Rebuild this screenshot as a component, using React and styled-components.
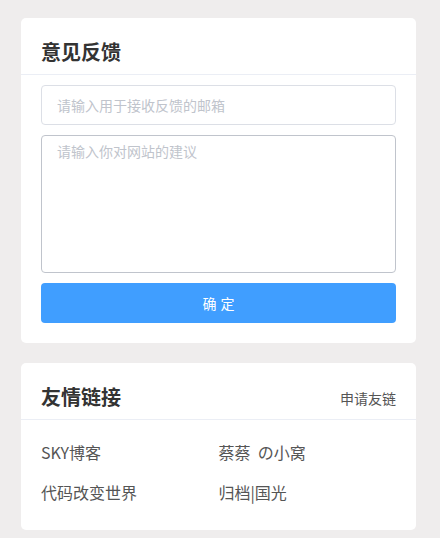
import React from "react";
import styled, { createGlobalStyle } from "styled-components";

const Global = createGlobalStyle`
  html, body { margin: 0; padding: 0; background: #efeded; }
  body { font-family: "Noto Sans CJK SC", "Noto Sans", sans-serif; }
  * { box-sizing: border-box; }
`;

const Page = styled.div`
  padding: 18px 24px 8px 21px;
  display: flex;
  flex-direction: column;
  gap: 20px;
  width: 440px;
`;

const Card = styled.section`
  background: #fff;
  border-radius: 5px;
  width: 395px;
`;

const Header = styled.div`
  height: 57px;
  padding: 0 20px;
  display: flex;
  align-items: center;
  justify-content: space-between;
  border-bottom: 1px solid #ebeef5;
`;

const Title = styled.h2`
  margin: 0;
  padding-top: 11px;
  font-size: 20px;
  font-weight: 700;
  color: #333;
`;

const HeaderLink = styled.a`
  padding-top: 14px;
  font-size: 14px;
  color: #555;
  text-decoration: none;
`;

const FormBody = styled.div`
  padding: 10px 20px 20px;
  display: flex;
  flex-direction: column;
  gap: 10px;
`;

const Input = styled.input`
  height: 40px;
  width: 100%;
  border: 1px solid #dcdfe6;
  border-radius: 4px;
  padding: 0 15px;
  font-family: inherit;
  font-size: 14px;
  outline: none;
  &::placeholder { color: #c0c4cc; }
`;

const TextArea = styled.textarea`
  height: 138px;
  width: 100%;
  border: 1px solid #c0c4cc;
  border-radius: 4px;
  padding: 5px 15px;
  font-family: inherit;
  font-size: 14px;
  line-height: 1.5;
  resize: none;
  outline: none;
  display: block;
  &::placeholder { color: #c0c4cc; }
`;

const Button = styled.button`
  height: 40px;
  width: 100%;
  border: none;
  border-radius: 4px;
  background: #409eff;
  color: #fff;
  font-family: inherit;
  font-size: 14px;
  letter-spacing: 4px;
  text-indent: 4px;
  cursor: pointer;
`;

const LinkGrid = styled.div`
  padding: 12px 20px 18px;
  display: grid;
  grid-template-columns: 1fr 1fr;
`;

const FriendLink = styled.a`
  height: 40px;
  line-height: 40px;
  font-size: 16px;
  color: #555;
  text-decoration: none;
  white-space: pre;
`;

const links = ["SKY博客", "蔡蔡  の小窝", "代码改变世界", "归档|国光"];

export default function App() {
  return (
    <>
      <Global />
      <Page>
        <Card>
          <Header>
            <Title>意见反馈</Title>
          </Header>
          <FormBody>
            <Input placeholder="请输入用于接收反馈的邮箱" />
            <TextArea placeholder="请输入你对网站的建议" />
            <Button>确定</Button>
          </FormBody>
        </Card>
        <Card>
          <Header>
            <Title>友情链接</Title>
            <HeaderLink href="#">申请友链</HeaderLink>
          </Header>
          <LinkGrid>
            {links.map((l) => (
              <FriendLink key={l} href="#">{l}</FriendLink>
            ))}
          </LinkGrid>
        </Card>
      </Page>
    </>
  );
}
